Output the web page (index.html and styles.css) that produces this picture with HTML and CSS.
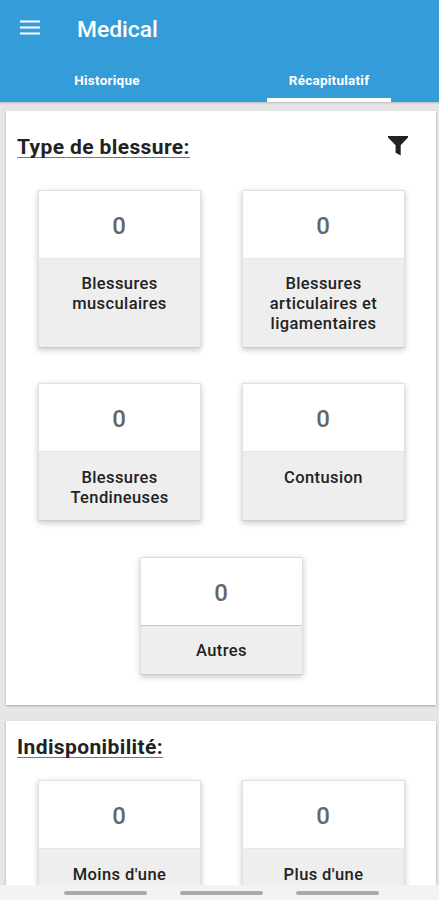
FILE: index.html
```html
<!DOCTYPE html>
<html lang="fr">
<head>
<meta charset="utf-8">
<title>Medical</title>
<link rel="stylesheet" href="styles.css">
</head>
<body>
<div class="app">
  <header class="header">
    <div class="toolbar">
      <svg class="menu" viewBox="0 0 20 15"><path d="M0 1.5h20M0 7.5h20M0 13.5h20" stroke="#fff" stroke-width="2.2"/></svg>
      <h1 class="title">Medical</h1>
    </div>
    <nav class="tabs">
      <div class="tab"><span>Historique</span></div>
      <div class="tab active"><span>Récapitulatif</span></div>
    </nav>
  </header>
  <main class="content">
    <section class="panel first">
      <div class="panel-head">
        <h2><span>Type de blessure:</span></h2>
        <svg class="filter" viewBox="0 0 20 20"><path d="M0 0h20v1.5L12.7 9.3V19.6L7.6 16.8V9.3L0 1.5z" fill="#222"/></svg>
      </div>
      <div class="cards">
        <div class="card"><div class="count">0</div><div class="label">Blessures<br>musculaires</div></div>
        <div class="card"><div class="count">0</div><div class="label">Blessures<br>articulaires et<br>ligamentaires</div></div>
        <div class="card"><div class="count">0</div><div class="label">Blessures<br>Tendineuses</div></div>
        <div class="card"><div class="count">0</div><div class="label">Contusion</div></div>
        <div class="card"><div class="count ruled">0</div><div class="label">Autres</div></div>
      </div>
    </section>
    <section class="panel second">
      <div class="panel-head"><h2><span>Indisponibilité:</span></h2></div>
      <div class="cards">
        <div class="card"><div class="count">0</div><div class="label">Moins d'une</div></div>
        <div class="card"><div class="count">0</div><div class="label">Plus d'une</div></div>
      </div>
    </section>
  </main>
  <footer class="navbar"><i></i><i></i><i></i></footer>
</div>
</body>
</html>
```

FILE: styles.css
```css
* { box-sizing: border-box; }
body { margin: 0; font-family: Roboto, "Liberation Sans", sans-serif; color: #222; }
.app { display: flex; flex-direction: column; width: 439px; height: 900px; overflow: hidden; background: #e6e6e6; }
.header { flex: none; height: 102px; background: #349dd9; color: #fff; box-shadow: 0 1px 2px rgba(0,0,0,.2); }
.toolbar { display: flex; align-items: center; height: 56px; padding-left: 20px; }
.menu { width: 20px; height: 15px; margin-top: -1px; }
.title { margin: 3px 0 0 37px; font-size: 22.8px; line-height: 28px; font-weight: 500; letter-spacing: 0; }
.tabs { display: flex; height: 46px; }
.tab { width: 124px; height: 46px; margin-left: 45px; text-align: center; font-size: 13.5px; font-weight: 700; line-height: 48px; letter-spacing: .25px; }
.tab + .tab { margin-left: 98px; }
.active { border-bottom: 4px solid #fff; }
.content { flex: 1; min-height: 0; overflow: hidden; padding: 9px 3px 0 6px; }
.panel { background: #fff; box-shadow: 0 1px 2px rgba(0,0,0,.3); }
.first { height: 594px; margin-bottom: 16px; }
.panel-head { display: flex; justify-content: space-between; padding: 25px 28px 0 11px; height: 78.5px; }
.second .panel-head { height: 59px; padding-top: 15px; }
h2 { margin: 0; font-size: 21px; line-height: 22px; font-weight: 700; letter-spacing: .38px; }
h2 span { display: inline-block; height: 22px; border-bottom: 1px solid #777; }
.filter { width: 20px; height: 20px; }
.cards { display: flex; flex-wrap: wrap; justify-content: center; gap: 35.5px 41px; }
.card { display: flex; flex-direction: column; width: 163px; border: 1px solid #e0e0e0; border-bottom-color: #ccc; background: #eee; box-shadow: 0 2px 6px rgba(0,0,0,.22); }
.count { flex: none; height: 68px; background: #fff; color: #666; text-align: center; font-size: 24px; font-weight: 500; line-height: 71px; border-bottom: 1px solid #e7e7e7; }
.ruled { border-bottom-color: #c4c4c4; }
.label { padding: 15.5px 0 12.5px 1px; text-align: center; font-size: 16.5px; line-height: 20px; font-weight: 500; letter-spacing: .4px; }
.navbar { flex: none; z-index: 1; display: flex; justify-content: center; gap: 33px; height: 15px; padding: 6px 0 0 4px; background: #f3f3f3; }
.navbar i { width: 83px; height: 4px; border-radius: 2px; background: #aaa; }
```
